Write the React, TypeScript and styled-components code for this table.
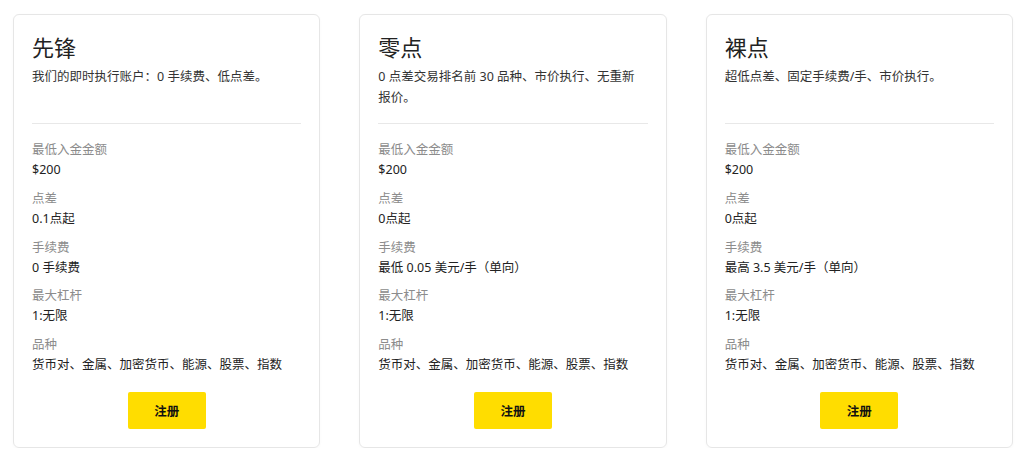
import React from 'react';
import styled, { createGlobalStyle } from 'styled-components';

const GlobalStyle = createGlobalStyle`
    html, body {
        margin: 0;
        padding: 0;
        background: #fff;
    }
    body {
        font-family: "Noto Sans", "Noto Sans CJK SC", sans-serif;
        color: #222;
    }
`;

interface Account {
    name: string;
    intro: string;
    spread: string;
    fee: string;
}

const accounts: Account[] = [
    { name: '先锋', intro: '我们的即时执行账户：0 手续费、低点差。', spread: '0.1点起', fee: '0 手续费' },
    { name: '零点', intro: '0 点差交易排名前 30 品种、市价执行、无重新报价。', spread: '0点起', fee: '最低 0.05 美元/手（单向）' },
    { name: '裸点', intro: '超低点差、固定手续费/手、市价执行。', spread: '0点起', fee: '最高 3.5 美元/手（单向）' },
];

export default function App(): JSX.Element {
    return (
        <>
            <GlobalStyle />
            <Grid>
                {accounts.map(acc => (
                    <Card key={acc.name}>
                        <Head>
                            <Title>{acc.name}</Title>
                            <Intro>{acc.intro}</Intro>
                        </Head>
                        <Divider />
                        <Specs>
                            <Spec>
                                <Label>最低入金金额</Label>
                                <Value>$200</Value>
                            </Spec>
                            <Spec>
                                <Label>点差</Label>
                                <Value>{acc.spread}</Value>
                            </Spec>
                            <Spec>
                                <Label>手续费</Label>
                                <Value>{acc.fee}</Value>
                            </Spec>
                            <Spec>
                                <Label>最大杠杆</Label>
                                <Value>1:无限</Value>
                            </Spec>
                            <Spec>
                                <Label>品种</Label>
                                <Value>货币对、金属、加密货币、能源、股票、指数</Value>
                            </Spec>
                        </Specs>
                        <SignUp type="button">注册</SignUp>
                    </Card>
                ))}
            </Grid>
        </>
    );
}

const Grid = styled.div`
    display: grid;
    grid-template-columns: repeat(3, 1fr);
    gap: 39px;
    padding: 14px 11px 0 13px;
`;

const Card = styled.div`
    display: flex;
    flex-direction: column;
    height: 434px;
    box-sizing: border-box;
    padding: 17px 18px 0 18px;
    border: 1px solid #e6e6e6;
    border-radius: 6px;
    box-shadow: 0 1px 3px rgba(0, 0, 0, 0.03);
`;

const Head = styled.div`
    height: 91px;
`;

const Title = styled.h3`
    margin: 0;
    font-size: 22px;
    font-weight: 400;
    line-height: 30px;
    color: #222;
`;

const Intro = styled.p`
    margin: 4px 0 0;
    padding-right: 6px;
    font-size: 12.5px;
    line-height: 21px;
    color: #333;
`;

const Divider = styled.hr`
    margin: 0;
    border: 0;
    border-top: 1px solid #e8e8e8;
`;

const Specs = styled.div`
    display: flex;
    flex-direction: column;
    gap: 8.75px;
    margin-top: 16px;
`;

const Spec = styled.div`
    display: flex;
    flex-direction: column;
`;

const Label = styled.div`
    font-size: 12.5px;
    line-height: 20px;
    color: #8c8c8c;
`;

const Value = styled.div`
    font-size: 12.5px;
    line-height: 20px;
    color: #222;
`;

const SignUp = styled.button`
    align-self: center;
    margin-top: 17px;
    width: 78px;
    height: 37px;
    border: 0;
    border-radius: 2px;
    background: #ffdd00;
    color: #111;
    font-family: "Noto Sans CJK SC", sans-serif;
    font-size: 12.5px;
    font-weight: 700;
    cursor: pointer;
`;
